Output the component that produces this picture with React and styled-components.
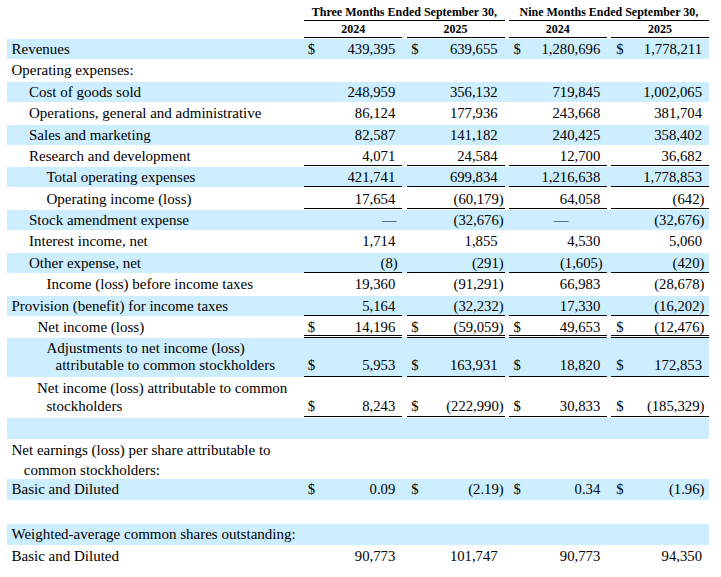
import React from 'react';
import styled, { createGlobalStyle } from 'styled-components';

const GlobalStyle = createGlobalStyle`
  html, body { margin: 0; padding: 0; background: #ffffff; }
  body {
    font-family: "Liberation Serif", "Times New Roman", serif;
    color: #000000;
  }
`;

const COLS = '293px 98px 98px 98px 98px';
const SHADE = '#cceeff';

const Statement = styled.div`
  width: 702px;
  margin-left: 7px;
  display: flex;
  flex-direction: column;
  gap: 1px;
  font-size: 14.7px;
`;

const Head = styled.div`
  display: flex;
  flex-direction: column;
`;

const HeadRow = styled.div`
  display: grid;
  grid-template-columns: ${COLS};
  column-gap: 4.25px;
  height: ${(p) => p.$h}px;
`;

const HeadCell = styled.div`
  grid-column: ${(p) => p.$col};
  box-sizing: border-box;
  border-bottom: 1px solid #000;
  padding-top: ${(p) => p.$pt || 0}px;
  font-size: 12px;
  font-weight: bold;
  line-height: 16px;
  text-align: center;
  white-space: nowrap;
`;

const Body = styled.div`
  display: flex;
  flex-direction: column;
  gap: 1.2px;
`;

const Row = styled.div`
  display: grid;
  grid-template-columns: ${COLS};
  column-gap: 4.25px;
  height: ${(p) => p.$h}px;
  line-height: ${(p) => p.$lh}px;
  background: ${(p) => (p.$shade ? SHADE : 'transparent')};
`;

const Label = styled.div`
  box-sizing: border-box;
  padding-top: ${(p) => p.$pt}px;
  font-size: 15px;
  white-space: nowrap;
`;

const Line = styled.div`
  padding-left: ${(p) => p.$indent}px;
`;

const RULES = {
  single: '1px solid #000',
  double: '3px double #000',
};

const Value = styled.div`
  box-sizing: border-box;
  height: 100%;
  display: flex;
  justify-content: space-between;
  align-items: flex-start;
  padding-top: ${(p) => p.$pt}px;
  padding-left: ${(p) => p.$pl}px;
  padding-right: ${(p) => p.$pr}px;
  border-bottom: ${(p) => (p.$rule ? RULES[p.$rule] : 'none')};
  white-space: nowrap;
`;

const Dollar = styled.span``;
const Amount = styled.span``;

const GROUPS = [
  { dl: 3.5, pos: 7, neg: 4.5, dash: 5.5 },
  { dl: 4.7, pos: 6.9, neg: 0.8, dash: 5.5 },
  { dl: 4.8, pos: 6.5, neg: 4, dash: 38.4 },
  { dl: 5.2, pos: 7, neg: 4.6, dash: 5.5 },
];

const L0 = 4.5;
const L1 = 22;
const L15 = 30.5;
const L2 = 39.5;

const single = { h: 20.2, lh: 16, pt: 2.1 };

const rows = [
  { ...single, shade: true, label: [['Revenues', L0]], dollar: true,
    vals: ['439,395', '639,655', '1,280,696', '1,778,211'] },
  { ...single, label: [['Operating expenses:', L0]] },
  { ...single, shade: true, label: [['Cost of goods sold', L1]],
    vals: ['248,959', '356,132', '719,845', '1,002,065'] },
  { ...single, label: [['Operations, general and administrative', L1]],
    vals: ['86,124', '177,936', '243,668', '381,704'] },
  { ...single, shade: true, label: [['Sales and marketing', L1]],
    vals: ['82,587', '141,182', '240,425', '358,402'] },
  { ...single, label: [['Research and development', L1]], rule: 'single',
    vals: ['4,071', '24,584', '12,700', '36,682'] },
  { ...single, shade: true, label: [['Total operating expenses', L2]], rule: 'single',
    vals: ['421,741', '699,834', '1,216,638', '1,778,853'] },
  { ...single, label: [['Operating income (loss)', L2]], rule: 'single',
    vals: ['17,654', '(60,179)', '64,058', '(642)'] },
  { ...single, shade: true, label: [['Stock amendment expense', L1]],
    vals: ['\u2014', '(32,676)', '\u2014', '(32,676)'] },
  { ...single, label: [['Interest income, net', L1]],
    vals: ['1,714', '1,855', '4,530', '5,060'] },
  { ...single, shade: true, label: [['Other expense, net', L1]], rule: 'single',
    vals: ['(8)', '(291)', '(1,605)', '(420)'] },
  { ...single, label: [['Income (loss) before income taxes', L2]],
    vals: ['19,360', '(91,291)', '66,983', '(28,678)'] },
  { ...single, shade: true, label: [['Provision (benefit) for income taxes', L0]], rule: 'single',
    vals: ['5,164', '(32,232)', '17,330', '(16,202)'] },
  { ...single, label: [['Net income (loss)', L15]], rule: 'double', dollar: true,
    vals: ['14,196', '(59,059)', '49,653', '(12,476)'] },
  { h: 38.4, lh: 16.7, pt: 2.05, shade: true,
    label: [['Adjustments to net income (loss)', L2], ['attributable to common stockholders', 48.5]],
    rule: 'single', dollar: true,
    vals: ['5,953', '163,931', '18,820', '172,853'] },
  { h: 38.8, lh: 18.4, pt: 0.9,
    label: [['Net income (loss) attributable to common', 30], ['stockholders', L2]],
    rule: 'double', dollar: true,
    vals: ['8,243', '(222,990)', '30,833', '(185,329)'] },
  { h: 20.8, lh: 16, pt: 2.4, shade: true, label: [] },
  { h: 37.6, lh: 20.5, pt: 0,
    label: [['Net earnings (loss) per share attributable to', L0], ['common stockholders:', 16.8]] },
  { h: 21, lh: 16, pt: 2.5, shade: true, label: [['Basic and Diluted', L0]], dollar: true,
    vals: ['0.09', '(2.19)', '0.34', '(1.96)'] },
  { h: 21.6, lh: 16, pt: 2.5, label: [] },
  { h: 21, lh: 16, pt: 2.5, shade: true, label: [['Weighted-average common shares outstanding:', L0]] },
  { h: 20.2, lh: 16, pt: 2.1, label: [['Basic and Diluted', L0]],
    vals: ['90,773', '101,747', '90,773', '94,350'] },
];

function padRight(g, v) {
  if (v.startsWith('(')) return g.neg;
  if (v === '\u2014') return g.dash;
  return g.pos;
}

function StatementRow({ row }) {
  const lines = Math.max(row.label.length, 1);
  const valuePt = row.pt + (lines - 1) * row.lh;
  return (
    <Row $h={row.h} $lh={row.lh} $shade={row.shade}>
      <Label $pt={row.pt}>
        {row.label.map(([text, indent]) => (
          <Line key={text} $indent={indent}>{text}</Line>
        ))}
      </Label>
      {row.vals &&
        row.vals.map((v, i) => {
          const g = GROUPS[i];
          return (
            <Value
              key={i}
              $pt={valuePt}
              $pl={g.dl}
              $pr={padRight(g, v)}
              $rule={row.rule}
            >
              <Dollar>{row.dollar ? '$' : ''}</Dollar>
              <Amount>{v}</Amount>
            </Value>
          );
        })}
    </Row>
  );
}

export default function App() {
  return (
    <>
      <GlobalStyle />
      <Statement>
        <Head>
          <HeadRow $h={21}>
            <HeadCell $col="2 / span 2" $pt={4}>Three Months Ended September 30,</HeadCell>
            <HeadCell $col="4 / span 2" $pt={4}>Nine Months Ended September 30,</HeadCell>
          </HeadRow>
          <HeadRow $h={17}>
            <HeadCell $col="2">2024</HeadCell>
            <HeadCell $col="3">2025</HeadCell>
            <HeadCell $col="4">2024</HeadCell>
            <HeadCell $col="5">2025</HeadCell>
          </HeadRow>
        </Head>
        <Body>
          {rows.map((row, i) => (
            <StatementRow key={i} row={row} />
          ))}
        </Body>
      </Statement>
    </>
  );
}
